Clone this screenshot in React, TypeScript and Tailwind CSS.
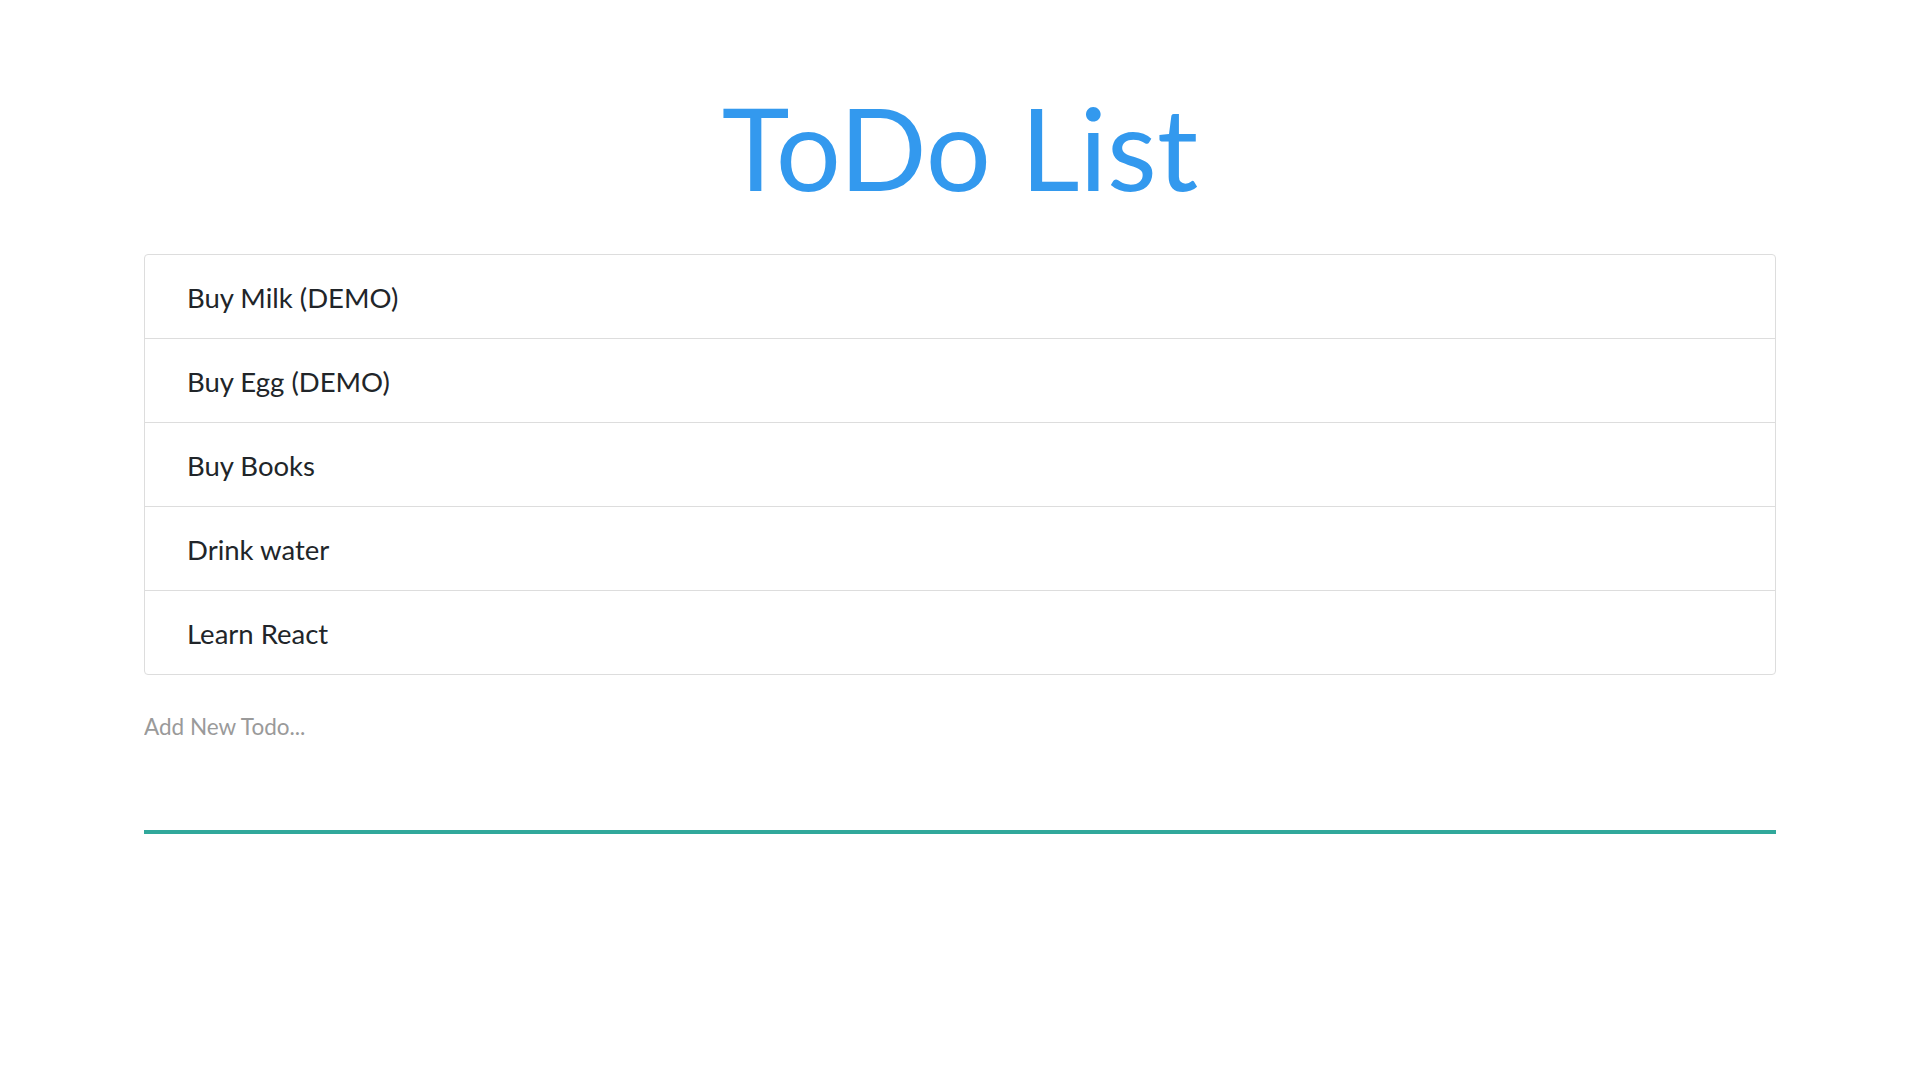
import React from "react"

const todos = ["Buy Milk (DEMO)", "Buy Egg (DEMO)", "Buy Books", "Drink water", "Learn React"]

export default function App() {
  return (
    <div className="min-h-screen w-full bg-white font-['Lato',sans-serif]">
      <div className="mx-auto w-[85%] pt-[89px]">
        {/* Title */}
        <h1 className="text-center text-[115px] leading-none font-normal text-[#3399ee]">ToDo List</h1>

        {/* List */}
        <ul className="mt-[50px] border border-[#dddddd] rounded-[4px]">
          {todos.map((t, i) => (
            <li
              key={t}
              className={`flex items-center pl-[42px] pt-[2px] text-[27.5px] text-[#212529] ${i < todos.length - 1 ? "h-[84px] border-b border-[#dddddd]" : "h-[83px]"}`}
            >
              {t}
            </li>
          ))}
        </ul>

        {/* New todo */}
        <textarea
          placeholder="Add New Todo..."
          className="mt-[37px] block h-[122px] w-full resize-none border-b-4 border-[#31a89b] bg-transparent p-0 text-[22.5px] leading-[30px] text-[#212529] outline-none placeholder:text-[#9a9a9a]"
        />
      </div>
    </div>
  )
}
